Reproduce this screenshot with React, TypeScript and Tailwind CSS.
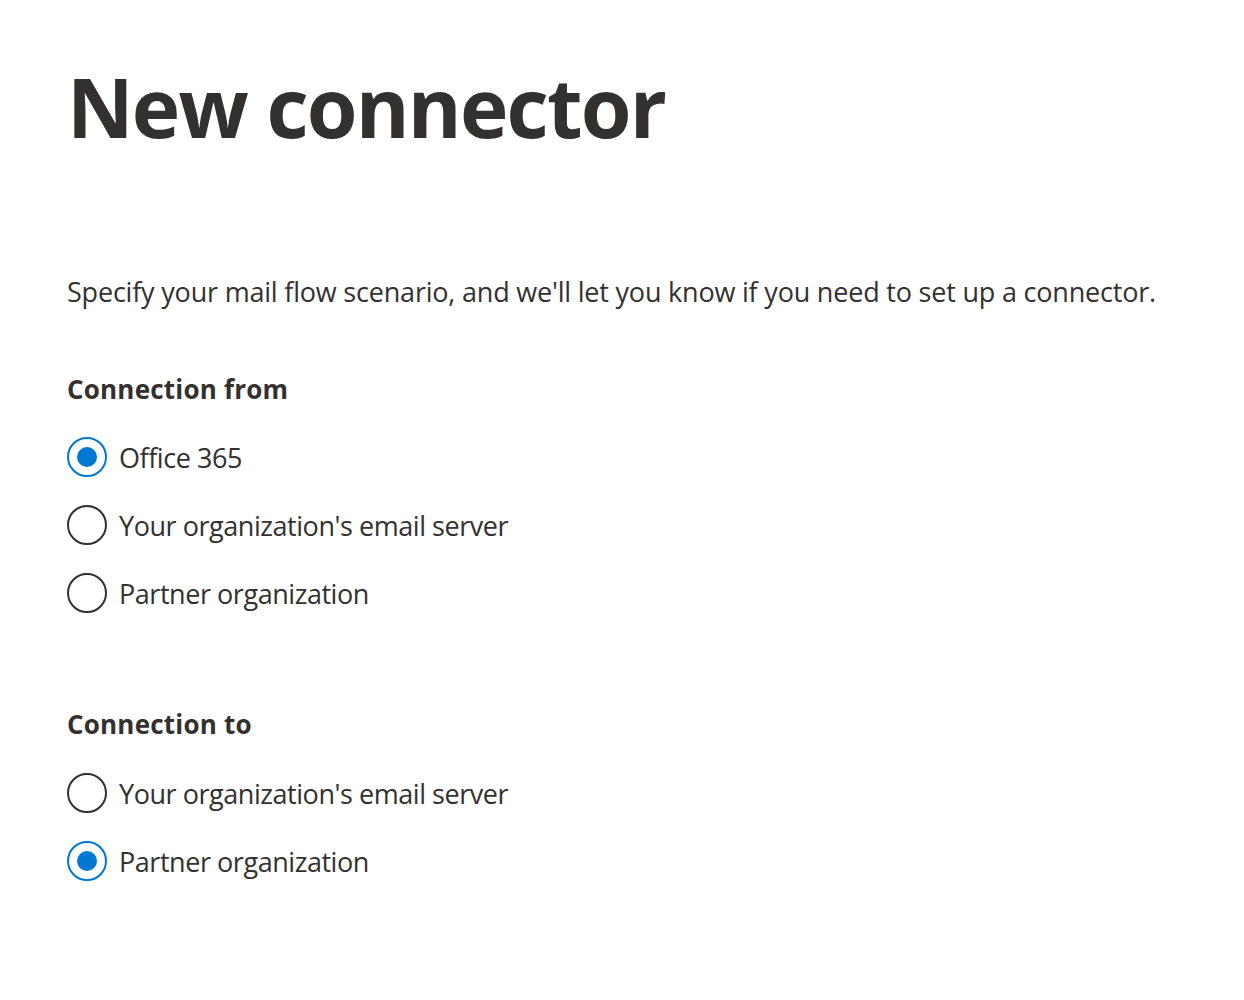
import { useState } from "react";

type Option = { id: string; label: string };

const fromOptions: Option[] = [
  { id: "o365", label: "Office 365" },
  { id: "org", label: "Your organization's email server" },
  { id: "partner", label: "Partner organization" },
];

const toOptions: Option[] = [
  { id: "org", label: "Your organization's email server" },
  { id: "partner", label: "Partner organization" },
];

function Radio({ checked, label, onSelect }: { checked: boolean; label: string; onSelect: () => void }) {
  return (
    <button
      type="button"
      onClick={onSelect}
      className="flex h-[68px] items-center gap-3 text-left"
    >
      {checked ? (
        <span className="flex h-10 w-10 shrink-0 items-center justify-center rounded-full border-2 border-[#0078d4]">
          <span className="h-5 w-5 rounded-full bg-[#0078d4]" />
        </span>
      ) : (
        <span className="h-10 w-10 shrink-0 rounded-full border-2 border-[#323130]" />
      )}
      <span className="text-[27px] leading-none tracking-[-0.45px] text-[#323130]">{label}</span>
    </button>
  );
}

export default function App() {
  const [from, setFrom] = useState("o365");
  const [to, setTo] = useState("partner");

  return (
    <div className="min-h-screen bg-white px-[67px] text-[#323130]" style={{ fontFamily: '"Open Sans", "Noto Sans", sans-serif' }}>
      {/* ===== Title ===== */}
      <h1 className="pt-[56px] text-[82px] font-bold leading-[100px] tracking-[-1.8px] text-[#323130]">New connector</h1>

      {/* ===== Description ===== */}
      <p className="mt-[118px] text-[27px] leading-[36px] tracking-[-0.2px]">
        Specify your mail flow scenario, and we'll let you know if you need to set up a connector.
      </p>

      {/* ===== Connection from ===== */}
      <h2 className="mt-[62px] text-[26px] font-bold leading-[34px] tracking-[0.2px]">Connection from</h2>
      <div className="mt-[17px] flex flex-col">
        {fromOptions.map((o) => (
          <Radio key={o.id} label={o.label} checked={from === o.id} onSelect={() => setFrom(o.id)} />
        ))}
      </div>

      {/* ===== Connection to ===== */}
      <h2 className="mt-[80px] text-[26px] font-bold leading-[34px] tracking-[0.2px]">Connection to</h2>
      <div className="mt-[18px] flex flex-col">
        {toOptions.map((o) => (
          <Radio key={o.id} label={o.label} checked={to === o.id} onSelect={() => setTo(o.id)} />
        ))}
      </div>
    </div>
  );
}
